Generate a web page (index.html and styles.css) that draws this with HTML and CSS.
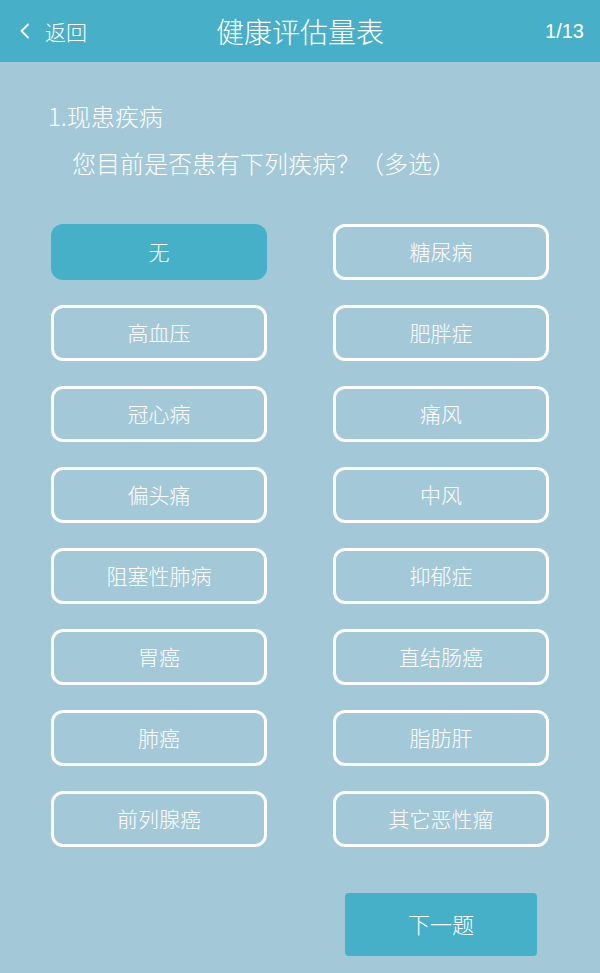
FILE: index.html
```html
<!DOCTYPE html>
<html lang="zh-CN">
<head>
<meta charset="utf-8">
<title>健康评估量表</title>
<link rel="stylesheet" href="styles.css">
</head>
<body>
<header class="topbar">
  <a class="back">
    <svg class="chev" width="12" height="16" viewBox="0 0 12 16"><path d="M10 1.5 L3.5 8 L10 14.5" fill="none" stroke="#fff" stroke-width="1.8" stroke-linecap="round" stroke-linejoin="round"/></svg>
    <span>返回</span>
  </a>
  <h1 class="title">健康评估量表</h1>
  <span class="progress">1/13</span>
</header>
<main class="content">
  <h2 class="q-title">1.现患疾病</h2>
  <p class="q-text">您目前是否患有下列疾病？（多选）</p>
  <div class="options">
    <button class="opt selected">无</button>
    <button class="opt">糖尿病</button>
    <button class="opt">高血压</button>
    <button class="opt">肥胖症</button>
    <button class="opt">冠心病</button>
    <button class="opt">痛风</button>
    <button class="opt">偏头痛</button>
    <button class="opt">中风</button>
    <button class="opt">阻塞性肺病</button>
    <button class="opt">抑郁症</button>
    <button class="opt">胃癌</button>
    <button class="opt">直结肠癌</button>
    <button class="opt">肺癌</button>
    <button class="opt">脂肪肝</button>
    <button class="opt">前列腺癌</button>
    <button class="opt">其它恶性瘤</button>
  </div>
  <div class="footer">
    <button class="next">下一题</button>
  </div>
</main>
</body>
</html>
```
FILE: styles.css
```css
* { box-sizing: border-box; }
html, body {
  margin: 0;
  padding: 0;
}
body {
  width: 600px;
  height: 973px;
  background: #a3c8d8;
  color: #fff;
  font-family: "Noto Sans CJK SC", "Noto Sans", sans-serif;
  font-weight: 300;
  overflow: hidden;
}
.topbar {
  height: 62px;
  background: #47afc8;
  display: flex;
  align-items: center;
  justify-content: space-between;
  padding: 0 16px 0 18px;
  position: relative;
}
.back {
  display: flex;
  align-items: center;
  gap: 15px;
  font-size: 21px;
  line-height: 1;
  color: #fff;
}
.chev { display: block; }
.title {
  position: absolute;
  left: 0;
  right: 0;
  top: 0;
  height: 62px;
  margin: 0;
  text-align: center;
  font-size: 28px;
  font-weight: 300;
  line-height: 62px;
  pointer-events: none;
}
.progress {
  font-family: "Liberation Sans", "Noto Sans", sans-serif;
  font-size: 20px;
}
.content {
  padding: 38px 0 0 0;
}
.q-title {
  margin: 0 0 15px 48px;
  font-size: 24px;
  font-weight: 300;
  line-height: 32px;
}
.q-text {
  margin: 0 0 45px 72px;
  font-size: 24px;
  line-height: 32px;
}
.options, .footer {
  display: grid;
  grid-template-columns: 216px 216px;
  column-gap: 66px;
  padding-left: 51px;
}
.options {
  row-gap: 25px;
}
.opt {
  height: 56px;
  border: 3px solid #fff;
  border-radius: 12px;
  background: transparent;
  color: #fff;
  font-family: inherit;
  font-weight: 300;
  font-size: 21px;
  padding: 0 0 2px 0;
}
.opt.selected {
  background: #47b0c9;
  border-color: #47b0c9;
}
.footer {
  margin-top: 46px;
}
.next {
  grid-column: 2;
  justify-self: center;
  width: 192px;
  height: 63px;
  border: none;
  border-radius: 4px;
  background: #47b0c9;
  color: #fff;
  font-family: inherit;
  font-weight: 300;
  font-size: 22px;
  padding: 0 0 3px 0;
}
```
